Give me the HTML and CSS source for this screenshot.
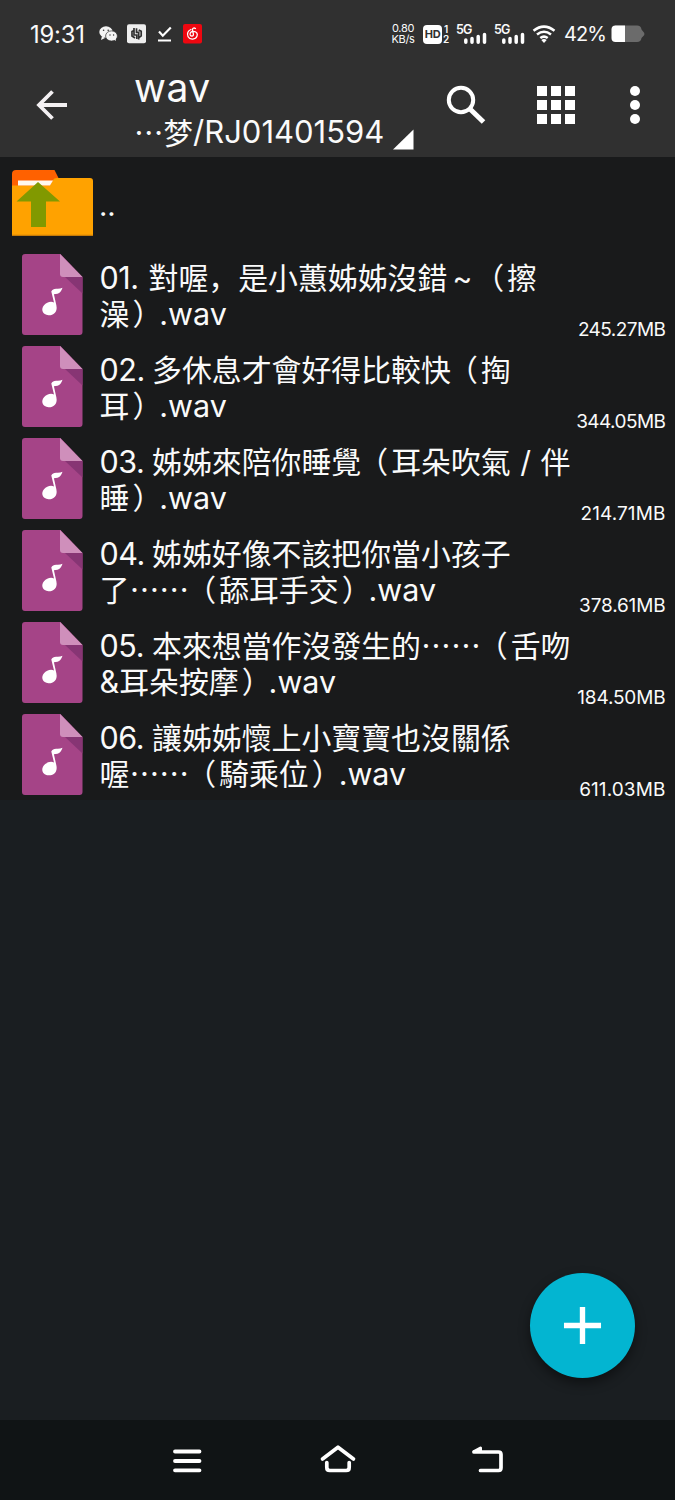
FILE: index.html
```html
<!DOCTYPE html>
<html lang="zh-Hans">
<head>
<meta charset="utf-8">
<title>wav</title>
<link rel="stylesheet" href="styles.css">
</head>
<body>
<svg width="0" height="0" class="defs">
  <symbol id="audio" viewBox="0 0 61 81">
    <path d="M3 0H38.500L60.500 23V78a3 3 0 0 1-3 3H3a3 3 0 0 1-3-3V3a3 3 0 0 1 3-3z" fill="#a54487"/>
    <path d="M43 23H60.500V39.500z" fill="#873574"/>
    <path d="M38 0L60.500 23H41a3 3 0 0 1-3-3z" fill="#cf8fbb"/>
    <path d="M29.300 37.500Q30.800 34.500 34.500 34.700Q38 35 40.500 33.700Q39 38.500 35.500 39.800L31.900 40.300L34.400 51.500C36 59 30 61.800 26.500 61.300C20.500 60.700 18.500 55.500 22 51.300C24.500 48.200 29 47 32 48.500z" fill="#fff"/>
  </symbol>
  <symbol id="signal" viewBox="0 0 31 21">
    <path d="M9.800 16v2.200M16 14.500v3.700M22.200 12.500v5.700M28.500 10.500v7.700" stroke="#fff" stroke-width="3.500" stroke-linecap="round" fill="none"/>
  </symbol>
</svg>
<div class="phone">
  <header class="top">
    <div class="status">
      <span class="clock">19:31</span>
      <svg class="notif" width="108" height="24" viewBox="96 22 108 24">
        <ellipse cx="106" cy="32" rx="6.700" ry="5.800" fill="#f4f4f4"/>
        <path d="M102 36l-1 4 4-2z" fill="#f4f4f4"/>
        <ellipse cx="111.500" cy="36" rx="5.900" ry="5.100" fill="#f4f4f4" stroke="#303030" stroke-width=".7"/>
        <path d="M113 39l3 2-.5-3z" fill="#f4f4f4"/>
        <g fill="#303030"><circle cx="103.600" cy="30.300" r=".8"/><circle cx="108.200" cy="30.300" r=".8"/><circle cx="110" cy="35" r=".7"/><circle cx="113.600" cy="35" r=".7"/></g>
        <rect x="127" y="24.300" width="19" height="19" rx="2" fill="#eee"/>
        <path d="M134 28v7h2.800v4M134 30.500l-2 1v4.500l3 2M138.700 39.500v-7.200h-2.200v-4M138.700 30l2.500 1.300v4.500l-2.500 2" fill="none" stroke="#303030" stroke-width="1.700"/>
        <path d="M159 31.500l3.800 4.200 8-8.200M158 40.500h13" fill="none" stroke="#fff" stroke-width="2.200"/>
        <rect x="183" y="24" width="19" height="19.500" rx="2" fill="#ee0710"/>
        <path d="M195.500 28.500c-1.800-1.200-3.300.1-3 1.800l.9 3.900c.4 2.200-2.900 2.500-3.300.5-.3-2.200 1.200-3.200 3-3.300 3.600-.1 4.800 2.500 3.900 4.700-1.300 3.600-7 4.100-8.900.6-1.600-3.100.1-6.200 2.800-7.200" fill="none" stroke="#fff" stroke-width="1.300" stroke-linecap="round"/>
      </svg>
      <div class="sysicons">
        <div class="speed"><span>0.80</span><span>KB/s</span></div>
        <div class="hd"><b>HD</b></div>
        <div class="sim"><span>1</span><span>2</span></div>
        <div class="cell"><span>5G</span><svg width="31" height="21"><use href="#signal"/></svg></div>
        <div class="cell second"><span>5G</span><svg width="31" height="21"><use href="#signal"/></svg></div>
        <svg class="wifi" width="24" height="20" viewBox="0 0 24 20">
          <path d="M1.500 6.700Q12-1.500 22.500 6.700M5 10.500Q12 5 19 10.500M8.300 14Q12 11.200 15.700 14" fill="none" stroke="#fff" stroke-width="2.500"/>
          <path d="M9.300 16Q12 14 14.700 16L12 19z" fill="#fff"/>
        </svg>
        <span class="percent">42%</span>
        <svg class="battery" width="34" height="18" viewBox="0 0 34 18">
          <path d="M4 .5H26Q30 .5 30.500 4.500L33.300 8v2L30.500 13Q30 17 26 17H4z" fill="#6b6b6b"/>
          <path d="M14 .5H4.500Q.5.500.5 4.500V13Q.5 17 4.500 17H14z" fill="#fff"/>
        </svg>
      </div>
    </div>
    <div class="toolbar">
      <svg class="back" width="34" height="34" viewBox="0 0 34 34"><path d="M33 17H5.500M18.500 3.500L5 17l13.500 13.500" fill="none" stroke="#f3f0f2" stroke-width="3.800"/></svg>
      <div class="titles">
        <div class="title">wav</div>
        <div class="path"><span>…梦</span><span class="lat">/RJ01401594</span></div>
      </div>
      <svg class="corner" width="21" height="21" viewBox="0 0 21 21"><path d="M20.500.5v20H0z" fill="#fff"/></svg>
      <svg class="search" width="40" height="40" viewBox="0 0 40 40"><circle cx="15" cy="15" r="12.200" fill="none" stroke="#fff" stroke-width="4"/><path d="M24 24l13.500 13" stroke="#fff" stroke-width="5"/></svg>
      <div class="grid"><i></i><i></i><i></i><i></i><i></i><i></i><i></i><i></i><i></i></div>
      <div class="more"><i></i><i></i><i></i></div>
    </div>
  </header>
  <main class="content">
    <div class="list">
      <div class="row parent">
        <svg class="folder" width="82" height="67" viewBox="0 0 82 67">
          <path d="M0 20V4Q0 0 4 0H42.500L47 9V20z" fill="#ff6100"/>
          <path d="M0 15.500H38L41 10Q42 8 45 8H78Q81 8 81 11V66H0z" fill="#ffa200"/>
          <path d="M6 10.500H41L38 15.500H6z" fill="#fff8ee"/>
          <path d="M0 64.800H81V66H0z" fill="#c57b09"/>
          <path d="M26 12L48 31.500H34V57H19V31.500H4.500z" fill="#819900"/>
        </svg>
        <div class="dots">..</div>
      </div>
      <div class="row">
        <svg class="file" width="61" height="81"><use href="#audio"/></svg>
        <div class="name"><div><span class="lat num one">01. </span>對喔，是小蕙姊姊沒錯<span class="full">~</span><span class="open">（</span>擦</div><div>澡<span class="close">）</span><span class="lat">.wav</span></div></div>
        <div class="size tight">245.27MB</div>
      </div>
      <div class="row">
        <svg class="file" width="61" height="81"><use href="#audio"/></svg>
        <div class="name"><div><span class="lat num">02. </span>多休息才會好得比較快<span class="open">（</span>掏</div><div>耳<span class="close">）</span><span class="lat">.wav</span></div></div>
        <div class="size tight">344.05MB</div>
      </div>
      <div class="row">
        <svg class="file" width="61" height="81"><use href="#audio"/></svg>
        <div class="name"><div><span class="lat num">03. </span>姊姊來陪你睡覺<span class="open">（</span>耳朵吹氣<span class="full">/</span>伴</div><div>睡<span class="close">）</span><span class="lat">.wav</span></div></div>
        <div class="size loose">214.71MB</div>
      </div>
      <div class="row">
        <svg class="file" width="61" height="81"><use href="#audio"/></svg>
        <div class="name"><div><span class="lat num">04. </span>姊姊好像不該把你當小孩子</div><div>了……<span class="open">（</span>舔耳手交<span class="close">）</span><span class="lat">.wav</span></div></div>
        <div class="size">378.61MB</div>
      </div>
      <div class="row">
        <svg class="file" width="61" height="81"><use href="#audio"/></svg>
        <div class="name"><div><span class="lat num">05. </span>本來想當作沒發生的……<span class="open">（</span>舌吻</div><div><span class="lat amp">&amp;</span>耳朵按摩<span class="close">）</span><span class="lat">.wav</span></div></div>
        <div class="size">184.50MB</div>
      </div>
      <div class="row">
        <svg class="file" width="61" height="81"><use href="#audio"/></svg>
        <div class="name"><div><span class="lat num">06. </span>讓姊姊懷上小寶寶也沒關係</div><div>喔……<span class="open">（</span>騎乘位<span class="close">）</span><span class="lat">.wav</span></div></div>
        <div class="size loose">611.03MB</div>
      </div>
    </div>
    <button class="fab"><svg width="39" height="39" viewBox="0 0 40 40"><path d="M20 1v38M1 20h38" stroke="#fff" stroke-width="5.500"/></svg></button>
  </main>
  <nav class="nav">
    <svg width="34" height="34" viewBox="0 0 34 34"><path d="M5 7.500h24.500M5 17h24.500M5 26.300h24.500" stroke="#fff" stroke-width="3.800" stroke-linecap="round"/></svg>
    <svg width="40" height="34" viewBox="0 0 40 34"><path d="M4.500 15L20 3.200 35.500 15M8.800 18.500V23.500Q8.800 26.500 11.800 26.500H28.200Q31.200 26.500 31.200 23.500V18.500" fill="none" stroke="#fff" stroke-width="3.700" stroke-linecap="round" stroke-linejoin="round"/></svg>
    <svg width="34" height="34" viewBox="0 0 34 34"><path d="M3 8H27.500Q30 8 30 10.500V23.800Q30 26.500 27.500 26.500H9.500" fill="none" stroke="#fff" stroke-width="3.700" stroke-linecap="round"/><path d="M3 7.500L9.500 4v3.500z" fill="#fff" stroke="#fff" stroke-width="3" stroke-linejoin="round"/></svg>
  </nav>
</div>
</body>
</html>
```

FILE: styles.css
```css
* { box-sizing: border-box; }
body { margin: 0; background: #1a1e21; }
.defs { position: absolute; }
svg { display: block; flex: none; }
.phone {
  width: 675px;
  height: 1500px;
  display: flex;
  flex-direction: column;
  overflow: hidden;
  color: #fafafa;
  font-family: Inter, "Noto Sans CJK SC", sans-serif;
}
.top { height: 157px; background: #303030; flex: none; }
.status { height: 68px; display: flex; align-items: center; padding: 0 30px; }
.clock { width: 66px; font-size: 23.8px; letter-spacing: -.2px; white-space: nowrap; }
.sysicons { margin-left: auto; display: flex; align-items: center; height: 24px; }
.speed { width: 26px; font-size: 11px; line-height: 11px; letter-spacing: -.3px; display: flex; flex-direction: column; align-items: center; }
.hd { width: 19px; height: 19px; margin-left: 7px; border-radius: 4px; background: #fff; color: #303030; font-size: 11px; line-height: 19px; text-align: center; letter-spacing: -.3px; }
.sim { width: 8px; font-size: 10px; font-weight: 600; line-height: 10px; display: flex; flex-direction: column; align-items: center; }
.cell { position: relative; margin-left: 6px; width: 31px; height: 21px; }
.cell.second { margin-left: 7px; }
.cell span { position: absolute; left: 0; top: 0; font-size: 12.5px; line-height: 12px; font-weight: 600; letter-spacing: -.8px; }
.wifi { margin-left: 7px; }
.percent { margin-left: 8px; width: 46px; font-size: 20px; letter-spacing: -.9px; }
.battery { margin-left: 1px; }
.toolbar { height: 89px; display: flex; padding-left: 34px; }
.back { margin-top: 20px; }
.titles { margin-left: 66px; width: 256px; white-space: nowrap; }
.title { font-size: 39px; line-height: 39px; height: 43px; letter-spacing: .5px; }
.path { font-size: 29.500px; line-height: 40px; height: 40px; display: flex; align-items: center; font-family: "Noto Sans CJK SC", sans-serif; }
.lat { font-family: Inter, sans-serif; }
.path .lat { font-size: 31px; letter-spacing: 0; margin-top: 2px; }
.corner { margin: 61px 0 0 3px; }
.search { margin: 17px 0 0 32px; }
.grid { margin: 18px 0 0 51px; display: grid; grid-template-columns: repeat(3, 10px); grid-auto-rows: 10px; gap: 4px; height: 38px; }
.grid i { background: #fff; }
.more { margin: 18px 0 0 55px; display: flex; flex-direction: column; gap: 4px; }
.more i { width: 10px; height: 10px; border-radius: 50%; background: #fff; }
.content { position: relative; flex: 1; }
.list { background: #191a1b; height: 643px; }
.row { height: 92px; display: flex; padding-left: 22px; position: relative; }
.row.parent { padding-left: 12px; height: 91px; }
.folder { margin-top: 13px; }
.dots { margin: 31px 0 0 5px; font-size: 29px; line-height: 36px; }
.file { margin-top: 6px; }
.name { margin: 10px 0 0 16.500px; width: 479px; font-family: "Noto Sans CJK SC", sans-serif; font-size: 29.9px; line-height: 36px; white-space: nowrap; }
.name > div { height: 36px; }
.name .lat { font-size: 30.500px; }
.num { display: inline-block; width: 52.5px; white-space: pre; letter-spacing: -.4px; }
.num.one { width: 49px; }
.open { margin: 0 3px 0 -3px; }
.close { margin: 0 -3px 0 3px; }
.full { display: inline-block; width: 29.8px; text-align: center; font-family: Inter, sans-serif; }
.size { margin: 69.500px 9.500px 0 auto; font-size: 19px; line-height: 24px; letter-spacing: -.15px; }
.size.tight { letter-spacing: -.55px; }
.size.loose { letter-spacing: .1px; }
.fab {
  position: absolute;
  right: 40px;
  bottom: 42px;
  width: 105px;
  height: 105px;
  padding: 0;
  border: 0;
  border-radius: 50%;
  background: #03b5d1;
  display: grid;
  place-items: center;
  box-shadow: 0 5px 12px rgba(0, 0, 0, .45);
}
.nav { height: 80px; background: #101415; display: flex; justify-content: space-between; padding: 24px 170px 0 170px; }
```
